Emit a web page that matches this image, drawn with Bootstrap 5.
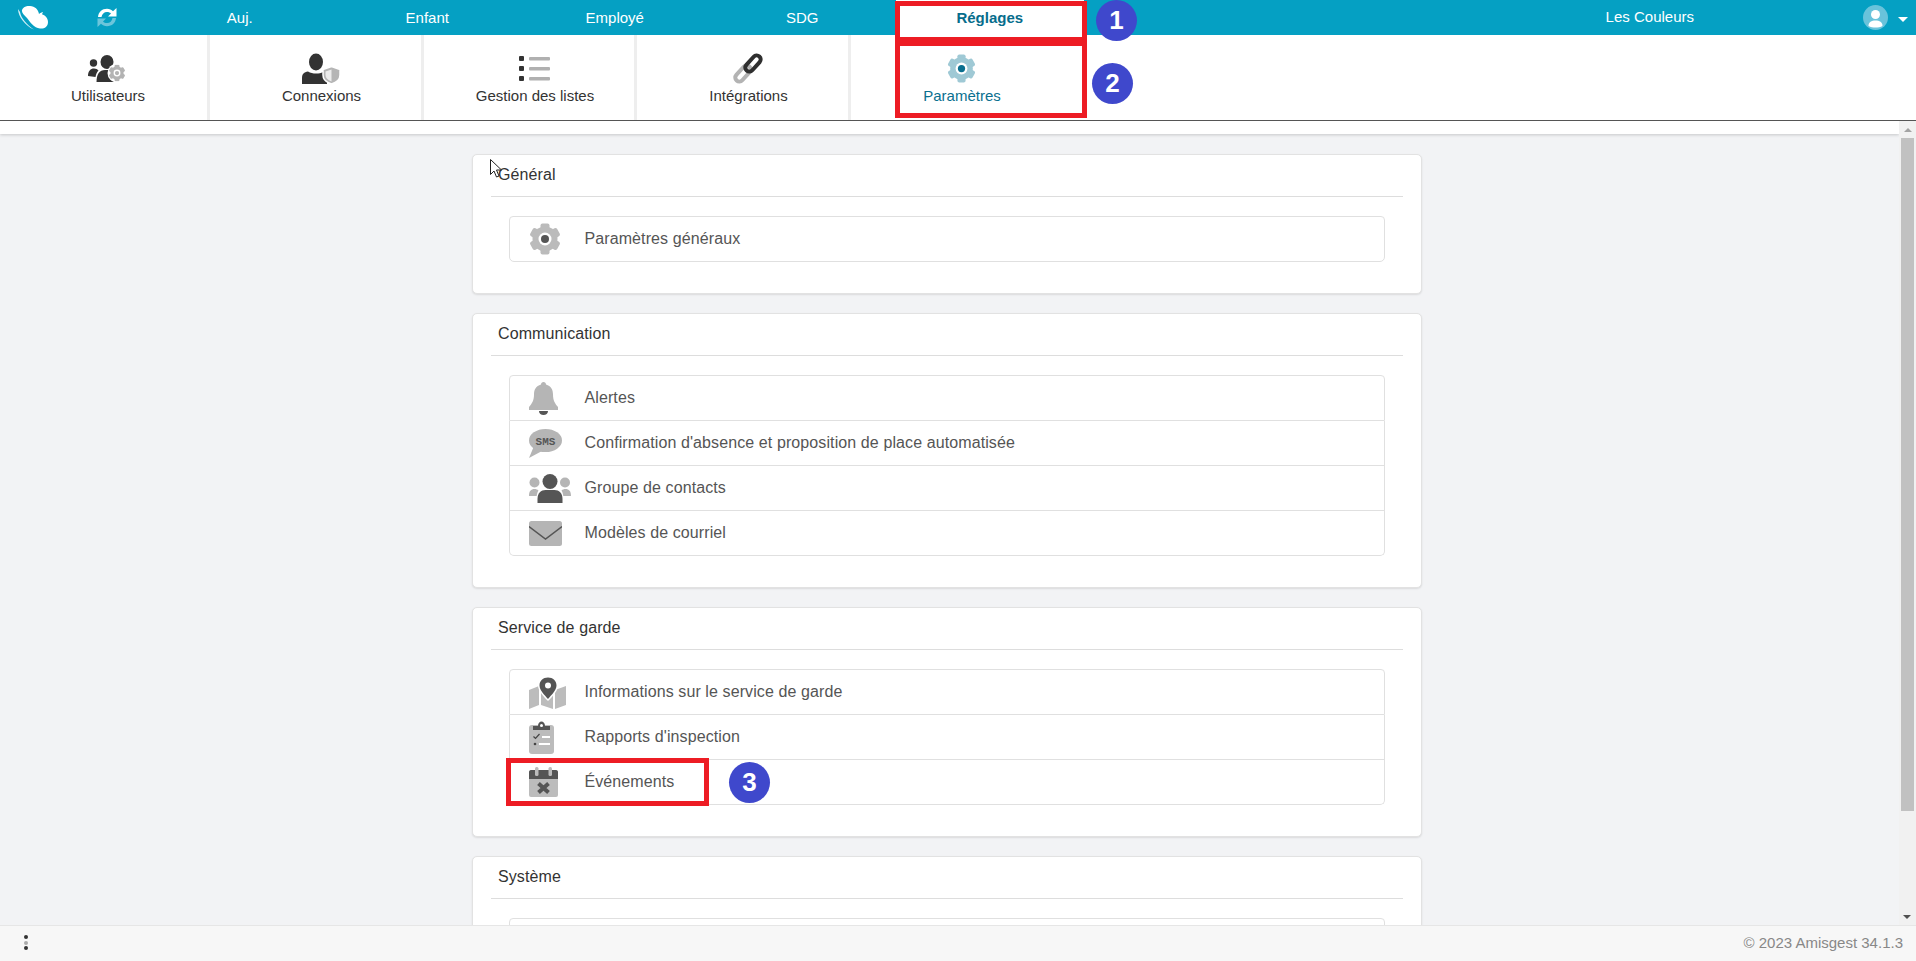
<!DOCTYPE html>
<html lang="fr">
<head>
<meta charset="utf-8">
<title>Réglages - Paramètres</title>
<link href="https://cdn.jsdelivr.net/npm/bootstrap@5.3.3/dist/css/bootstrap.min.css" rel="stylesheet">
<script src="https://cdn.jsdelivr.net/npm/bootstrap@5.3.3/dist/js/bootstrap.bundle.min.js"></script>
<style>
    html, body { height: 100%; }
    body {
        font-family: "Liberation Sans", Arial, sans-serif;
        background-color: #f2f3f5;
        color: #333;
        overflow: hidden;
        position: relative;
    }
    svg { display: block; }

    .top-bar { height: 35px; background-color: #05a0c3; font-size: 15px; flex: none; }
    .brand-area { width: 146px; padding-left: 18px; }
    .brand-refresh { margin-left: 49px; }
    .top-bar .nav-link { width: 187.5px; height: 35px; padding: 0; line-height: 35px; text-align: center; color: #fff; }
    .top-bar .nav-link.active { background-color: #fff; color: #066d8c; font-weight: 700; }
    .top-school { margin-right: 169px; color: #fff; }
    .top-user { padding-right: 8px; }
    .user-caret { width: 0; height: 0; margin-left: 10px; margin-top: 3px; border-left: 5px solid transparent; border-right: 5px solid transparent; border-top: 5px solid #fff; }

    .sub-bar { height: 86px; background-color: #fff; border-bottom: 1px solid #555; flex: none; }
    .sub-tab { width: 213.5px; height: 85px; padding: 17px 0 0 12.5px; border-right: 3px solid #eee; color: #333; font-size: 15px; text-decoration: none; }
    .sub-tab:first-child { margin-left: -3.5px; }
    .sub-tab.current { border-right-color: transparent; color: #0a6f8f; --gear-dot: #0a6f8f; }
    .tab-icon { height: 33px; margin-right: 2px; }
    .tab-label { line-height: 20px; margin-top: 1px; }
    .gear-flat { --gear-dot: #b3b3b3; }

    .main-area { min-height: 0; }
    .white-strip { height: 13px; background-color: #fff; box-shadow: 0 1px 3px rgba(0, 0, 0, .18); }
    .cards-wrap { width: 950px; margin: 20px 0 0 472px; }
    .set-card { margin-bottom: 19px; border: 1px solid #e2e2e2; border-radius: 5px; box-shadow: 0 1px 2px rgba(0, 0, 0, .1); padding: 0 18px 31px; }
    .set-title { height: 42px; padding-left: 7px; line-height: 40px; font-size: 16px; letter-spacing: .1px; border-bottom: 1px solid #ddd; }
    .set-card .set-list { margin: 19px 18px 0; border-top: 0; border-bottom: 0; border-radius: 4px; }
    .set-list .list-group-item { height: 45px; padding: 0 0 0 19px; color: #555; font-size: 16px; letter-spacing: .1px; border-color: #e0e0e0; }
    .set-list .list-group-item:first-child { height: 46px; }
    .row-icon { width: 55.5px; }

    .scroll-track { width: 17px; background-color: #f1f1f1; flex: none; }
    .scroll-up { height: 17px; }
    .scroll-up::after { content: ""; display: block; margin: 7px auto 0; width: 0; height: 0; border-left: 4px solid transparent; border-right: 4px solid transparent; border-bottom: 4px solid #a3a3a3; }
    .scroll-thumb { height: 673px; margin: 0 2px; background-color: #c1c1c1; }
    .scroll-down { margin-bottom: 6px; width: 0; height: 0; margin-left: 4px; border-left: 4px solid transparent; border-right: 4px solid transparent; border-top: 4px solid #505050; }

    .foot-bar { height: 36px; background-color: #f7f7f7; border-top: 1px solid #e6e6e6; color: #888; font-size: 15px; padding: 0 13px 0 24px; flex: none; z-index: 1; }
    .kebab span { display: block; width: 4px; height: 4px; border-radius: 50%; background-color: #333; margin-bottom: 1.5px; }
    .kebab span:nth-child(2) { background-color: #aaa; }

    .sms-text { font-family: "Liberation Mono", monospace; font-size: 11px; font-weight: 700; fill: #555; }

    .red-box { position: absolute; border: 5px solid #ed1c24; pointer-events: none; }
    .box-one { left: 895px; top: 1px; width: 192px; height: 41px; }
    .box-two { left: 895px; top: 41px; width: 192px; height: 77px; }
    .box-three { left: 506px; top: 758px; width: 203px; height: 48px; }
    .step-dot { position: absolute; width: 41px; height: 41px; border-radius: 50%; background-color: #3f48cc; color: #fff; font-size: 26px; font-weight: 700; line-height: 41px; text-align: center; }
    .dot-one { left: 1096px; top: 0; }
    .dot-two { left: 1092px; top: 63px; }
    .dot-three { left: 729px; top: 762px; }
    .mouse-arrow { position: absolute; left: 490px; top: 159px; }
</style>
</head>
<body class="d-flex flex-column">

<svg width="0" height="0" class="position-absolute">
    <symbol id="ic-gear" viewBox="0 0 32 32">
        <g fill="currentColor">
            <circle cx="16" cy="16" r="12.5"/>
            <rect x="11.5" y="0.5" width="9" height="31" rx="2"/>
            <rect x="11.5" y="0.5" width="9" height="31" rx="2" transform="rotate(60 16 16)"/>
            <rect x="11.5" y="0.5" width="9" height="31" rx="2" transform="rotate(120 16 16)"/>
        </g>
        <circle cx="16" cy="16" r="6.5" fill="#fff"/>
        <circle cx="16" cy="16" r="4" fill="var(--gear-dot, #555)"/>
    </symbol>
</svg>

<div class="top-bar d-flex align-items-center">
    <div class="brand-area d-flex align-items-center">
        <svg width="30" height="24" viewBox="0 0 30 24">
            <path fill="#d5f0f6" d="M0 3C0 10 7 20 16 23.500 9 19 3 12 2 6z"/>
            <path fill="#fff" d="M4 4C5 1 9-.5 12 0c5 .5 8 3 9 8 1-1 3-2 4-2l-1 2.300c3 1 6 3.700 6 7.700 0 5-4 7-8 6.500-6-.5-10-6.500-13-10.500C6 9 3.500 7 4 4z"/>
        </svg>
        <svg class="brand-refresh" width="20" height="19" viewBox="0 0 20 19">
            <path fill="#fff" d="M1 9C1.500 4 5 .8 10 .8c2.500 0 4.500 1 6 2.400L19.500 0v8.500H11l3-3C13 4.500 11.700 4 10 4 7 4 5 6 4.500 9z"/>
            <path fill="#6cc5db" d="M19 10c-.5 5-4 8.200-9 8.200-2.500 0-4.500-1-6-2.400L.5 19v-8.500H9l-3 3c1 1 2.300 1.500 4 1.500 3 0 5-2 5.500-5z"/>
        </svg>
    </div>
    <nav class="nav flex-nowrap">
        <a class="nav-link" href="#">Auj.</a>
        <a class="nav-link" href="#">Enfant</a>
        <a class="nav-link" href="#">Employé</a>
        <a class="nav-link" href="#">SDG</a>
        <a class="nav-link active" href="#">Réglages</a>
    </nav>
    <div class="top-user ms-auto d-flex align-items-center">
        <span class="top-school">Les Couleurs</span>
        <svg width="25" height="25" viewBox="0 0 25 25">
            <circle cx="12.5" cy="12.5" r="12.5" fill="#69c3db"/>
            <circle cx="12.5" cy="9.5" r="4.5" fill="#fff"/>
            <path fill="#fff" d="M5.500 21c0-4 3-5.500 7-5.500s7 1.500 7 5.500c-2 1-4.500 1.500-7 1.500s-5-.5-7-1.500z"/>
        </svg>
        <span class="user-caret"></span>
    </div>
</div>

<div class="sub-bar d-flex">
    <a class="sub-tab d-flex flex-column align-items-center" href="#">
        <div class="tab-icon d-flex align-items-center">
            <svg width="38" height="27" viewBox="0 0 38 27">
                <circle cx="5.5" cy="8" r="3.7" fill="#333"/>
                <path fill="#333" d="M0 21c0-5 2.500-7.500 6-7.500 2 0 3.500.8 4.500 2-1.500 1.500-2.500 3.500-3 6.500z"/>
                <ellipse cx="19" cy="7" rx="6.5" ry="7" fill="#333"/>
                <path fill="#333" d="M8.500 27c0-8 3-12 8.500-12h5c4 0 6 3 6 12z"/>
                <circle cx="29" cy="18" r="9.5" fill="#fff"/>
                <use class="gear-flat" href="#ic-gear" x="20.5" y="9.5" width="17" height="17" color="#b3b3b3"/>
            </svg>
        </div>
        <span class="tab-label">Utilisateurs</span>
    </a>
    <a class="sub-tab d-flex flex-column align-items-center" href="#">
        <div class="tab-icon d-flex align-items-center">
            <svg width="38" height="31" viewBox="0 0 38 31">
                <ellipse cx="14" cy="9" rx="7" ry="8.5" fill="#333"/>
                <path fill="#333" d="M0 31v-6c0-4 2-6 6-6.500 2.500 1.500 5 2 8 2s5-.5 7-1.500l4 1.500v10.500z"/>
                <path fill="#b5b5b5" stroke="#fff" stroke-width="1.5" d="M29.500 13.500l8.500 3V22c0 4.500-3.500 7.500-8.500 9-5-1.500-8.500-4.500-8.500-9v-5.500z"/>
                <path fill="#ececec" d="M29.500 16.500l-6 2V22c0 3 2 5 6 6.500z"/>
            </svg>
        </div>
        <span class="tab-label">Connexions</span>
    </a>
    <a class="sub-tab d-flex flex-column align-items-center" href="#">
        <div class="tab-icon d-flex align-items-center">
            <svg width="31" height="25" viewBox="0 0 31 25">
                <g fill="#333">
                    <rect width="5" height="5" rx="1"/>
                    <rect y="10" width="5" height="5" rx="1"/>
                    <rect y="20" width="5" height="5" rx="1"/>
                </g>
                <g fill="#b0b0b0">
                    <rect x="10" y="1" width="21" height="3.5" rx="1"/>
                    <rect x="10" y="11" width="21" height="3.5" rx="1"/>
                    <rect x="10" y="21" width="21" height="3.5" rx="1"/>
                </g>
            </svg>
        </div>
        <span class="tab-label">Gestion des listes</span>
    </a>
    <a class="sub-tab d-flex flex-column align-items-center" href="#">
        <div class="tab-icon d-flex align-items-center">
            <svg width="30" height="31" viewBox="0 0 30 31" fill="none">
                <rect x="-9.5" y="-4" width="19" height="8" rx="4" transform="translate(10 20.5) rotate(-48)" stroke="#b3b3b3" stroke-width="4"/>
                <rect x="-9.5" y="-4" width="19" height="8" rx="4" transform="translate(20 10.5) rotate(-48)" stroke="#2f2f2f" stroke-width="4"/>
            </svg>
        </div>
        <span class="tab-label">Intégrations</span>
    </a>
    <a class="sub-tab current d-flex flex-column align-items-center" href="#">
        <div class="tab-icon d-flex align-items-center">
            <svg width="29" height="29"><use href="#ic-gear" width="29" height="29" color="#9fc9d5"/></svg>
        </div>
        <span class="tab-label">Paramètres</span>
    </a>
</div>

<div class="main-area d-flex flex-grow-1">
    <div class="flex-grow-1 overflow-hidden">
        <div class="white-strip"></div>
        <div class="cards-wrap">

            <div class="card set-card">
                <div class="set-title">Général</div>
                <div class="list-group set-list">
                    <a href="#" class="list-group-item d-flex align-items-center">
                        <span class="row-icon"><svg width="32" height="32"><use href="#ic-gear" width="32" height="32" color="#bbb"/></svg></span>
                        Paramètres généraux
                    </a>
                </div>
            </div>

            <div class="card set-card">
                <div class="set-title">Communication</div>
                <div class="list-group set-list">
                    <a href="#" class="list-group-item d-flex align-items-center">
                        <span class="row-icon">
                            <svg width="29" height="33" viewBox="0 0 29 33">
                                <path fill="#b5b5b5" d="M14.500 0c1.500 0 2.500 1 2.500 2.500 5 1.500 7 5 7 10 0 6 2 9 5 12.500v3H0v-3c3-3.500 5-6.500 5-12.500 0-5 2-8.500 7-10C12 1 13 0 14.500 0z"/>
                                <path fill="#555" d="M10 29h9c0 2.500-2 4-4.500 4s-4.500-1.500-4.500-4z"/>
                            </svg>
                        </span>
                        Alertes
                    </a>
                    <a href="#" class="list-group-item d-flex align-items-center">
                        <span class="row-icon">
                            <svg width="33" height="29" viewBox="0 0 33 29">
                                <ellipse cx="16.5" cy="11.5" rx="16.5" ry="11.5" fill="#b5b5b5"/>
                                <path fill="#b5b5b5" d="M5 17L0 29l13-7z"/>
                                <text class="sms-text" x="16.5" y="15.5" text-anchor="middle">SMS</text>
                            </svg>
                        </span>
                        Confirmation d'absence et proposition de place automatisée
                    </a>
                    <a href="#" class="list-group-item d-flex align-items-center">
                        <span class="row-icon">
                            <svg width="42" height="29" viewBox="0 0 42 29">
                                <g fill="#b5b5b5">
                                    <circle cx="5.5" cy="8.5" r="5"/>
                                    <circle cx="36" cy="8.5" r="5"/>
                                    <path d="M0 22c0-5 2-7 5.500-7 1.500 0 3 .5 4 1.500-1 1.500-1.500 3.300-1.800 5.500z"/>
                                    <path d="M42 22c0-5-2-7-5.500-7-1.500 0-3 .5-4 1.500 1 1.500 1.500 3.300 1.800 5.500z"/>
                                </g>
                                <g fill="#555">
                                    <circle cx="21" cy="7.5" r="7.5"/>
                                    <path d="M8.500 29v-4c0-6 3.500-9 8-9h9c4.500 0 8 3 8 9v4z"/>
                                </g>
                            </svg>
                        </span>
                        Groupe de contacts
                    </a>
                    <a href="#" class="list-group-item d-flex align-items-center">
                        <span class="row-icon">
                            <svg width="33" height="25" viewBox="0 0 33 25">
                                <rect width="33" height="25" rx="2.5" fill="#b5b5b5"/>
                                <path d="M0 5.500l16.500 12.500L33 5.500" fill="none" stroke="#555" stroke-width="1.500"/>
                            </svg>
                        </span>
                        Modèles de courriel
                    </a>
                </div>
            </div>

            <div class="card set-card">
                <div class="set-title">Service de garde</div>
                <div class="list-group set-list">
                    <a href="#" class="list-group-item d-flex align-items-center">
                        <span class="row-icon">
                            <svg width="37" height="33" viewBox="0 0 37 33">
                                <g fill="#bcbcbc">
                                    <path d="M0 14l10-4v19L0 33z"/>
                                    <path d="M12 12l12 4v17l-12-4z"/>
                                    <path d="M26 14l11-4v19l-11 4z"/>
                                </g>
                                <path fill="#fff" d="M19 0c6 0 10 4.300 10 9.500C29 15 23 21 19 25c-4-4-10-10-10-15.500C9 4.300 13 0 19 0z"/>
                                <path fill="#555" d="M19 1.500c5 0 8.500 3.500 8.500 8 0 4.500-5 9.500-8.500 13.500-3.500-4-8.500-9-8.500-13.500 0-4.500 3.500-8 8.500-8z"/>
                                <circle cx="19" cy="9.5" r="3" fill="#fff"/>
                            </svg>
                        </span>
                        Informations sur le service de garde
                    </a>
                    <a href="#" class="list-group-item d-flex align-items-center">
                        <span class="row-icon">
                            <svg width="25" height="33" viewBox="0 0 25 33">
                                <rect y="4" width="25" height="29" rx="3" fill="#bcbcbc"/>
                                <path fill="#555" d="M4 9V5h5c0-6 7-6 7 0h5v4z"/>
                                <circle cx="12.5" cy="4.5" r="1.5" fill="#fff"/>
                                <path d="M4.500 15.500l2 2 4-4.500" fill="none" stroke="#444" stroke-width="1.200"/>
                                <rect x="13" y="15" width="8" height="2" fill="#fff"/>
                                <circle cx="6" cy="23" r="1.3" fill="#444"/>
                                <rect x="10" y="22" width="11" height="2" fill="#fff"/>
                            </svg>
                        </span>
                        Rapports d'inspection
                    </a>
                    <a href="#" class="list-group-item d-flex align-items-center">
                        <span class="row-icon">
                            <svg width="29" height="30" viewBox="0 0 29 30">
                                <rect y="3" width="29" height="27" rx="2" fill="#bcbcbc"/>
                                <path fill="#555" d="M0 12V5c0-1 1-2 2-2h25c1 0 2 1 2 2v7z"/>
                                <rect x="6" width="3.5" height="9" rx="1.5" fill="#bcbcbc"/>
                                <rect x="19.5" width="3.5" height="9" rx="1.5" fill="#bcbcbc"/>
                                <path d="M9.500 16.500l10 9M19.500 16.500l-10 9" stroke="#555" stroke-width="4"/>
                            </svg>
                        </span>
                        Événements
                    </a>
                </div>
            </div>

            <div class="card set-card">
                <div class="set-title">Système</div>
                <div class="list-group set-list">
                    <div class="list-group-item"></div>
                </div>
            </div>

        </div>
    </div>
    <div class="scroll-track d-flex flex-column">
        <div class="scroll-up"></div>
        <div class="scroll-thumb"></div>
        <div class="scroll-down mt-auto"></div>
    </div>
</div>

<div class="foot-bar d-flex align-items-center justify-content-between">
    <div class="kebab"><span></span><span></span><span></span></div>
    <span>© 2023 Amisgest 34.1.3</span>
</div>

<div class="red-box box-one"></div>
<div class="red-box box-two"></div>
<div class="red-box box-three"></div>
<div class="step-dot dot-one">1</div>
<div class="step-dot dot-two">2</div>
<div class="step-dot dot-three">3</div>
<svg class="mouse-arrow" width="13" height="20" viewBox="0 0 13 20">
    <path d="M.5.5v15l3.500-3.500 2.500 6 2.500-1-2.500-6h5z" fill="#fff" stroke="#222" stroke-width="1"/>
</svg>

</body>
</html>
